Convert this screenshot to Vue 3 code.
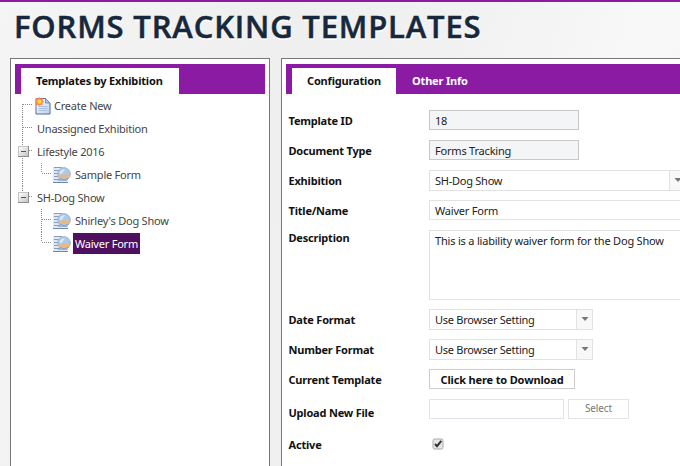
<script setup>
const tree = [
  { text: 'Create New', icon: 'new', level: 0, line: 'first' },
  { text: 'Unassigned Exhibition', level: 0, line: 'through' },
  { text: 'Lifestyle 2016', level: 0, line: 'through', toggle: true },
  { text: 'Sample Form', icon: 'doc', level: 1, parentLine: true, line: 'last' },
  { text: 'SH-Dog Show', level: 0, line: 'last', toggle: true },
  { text: "Shirley's Dog Show", icon: 'doc', level: 1, line: 'through' },
  { text: 'Waiver Form', icon: 'doc', level: 1, line: 'last', selected: true },
]
const rows = [
  { label: 'Template ID', type: 'readonly', value: '18' },
  { label: 'Document Type', type: 'readonly', value: 'Forms Tracking' },
  { label: 'Exhibition', type: 'wide', value: 'SH-Dog Show' },
  { label: 'Title/Name', type: 'text', value: 'Waiver Form' },
  { label: 'Description', type: 'area', value: 'This is a liability waiver form for the Dog Show' },
  { label: 'Date Format', type: 'combo', value: 'Use Browser Setting' },
  { label: 'Number Format', type: 'combo', value: 'Use Browser Setting' },
  { label: 'Current Template', type: 'button', value: 'Click here to Download' },
  { label: 'Upload New File', type: 'upload' },
  { label: 'Active', type: 'check' },
]
</script>

<template>
  <div class="page">
    <h1>FORMS TRACKING TEMPLATES</h1>
    <main>
      <section class="panel side">
        <nav class="tabs"><span class="tab active">Templates by Exhibition</span></nav>
        <ul class="tree">
          <li v-for="n in tree" :key="n.text" :class="['lvl' + n.level, { hasicon: n.icon }]">
            <svg class="lines" width="36" height="23" shape-rendering="crispEdges">
              <defs>
                <linearGradient id="knob" x2="1" y2="1"><stop stop-color="#fff" /><stop offset="1" stop-color="#c4c4c4" /></linearGradient>
              </defs>
              <g fill="none" stroke="#8c8c8c" stroke-dasharray="1 1">
                <template v-if="n.level === 0">
                  <path v-if="n.line === 'first'" d="M7.5 10V23" />
                  <path v-else-if="n.line === 'last'" d="M7.5 0V10" />
                  <path v-else d="M7.5 0V23" />
                  <path d="M8 10.500H17" />
                </template>
                <template v-else>
                  <path v-if="n.parentLine" d="M7.5 0V23" />
                  <path :d="n.line === 'last' ? 'M26.500 0V10' : 'M26.500 0V23'" />
                  <path d="M27 10.500H36" />
                </template>
              </g>
              <g v-if="n.toggle">
                <rect x="3" y="6" width="11" height="11" fill="#8e8e8e" />
                <path d="M3 6H13V7H4V16H3z" fill="#c4c4c4" />
                <rect x="4" y="7" width="9" height="9" fill="url(#knob)" />
                <path d="M6 11H11V12H6z" fill="#555" />
              </g>
            </svg>
            <svg v-if="n.icon === 'new'" class="ico new" width="16" height="18" viewBox="0 0 16 18">
              <defs>
                <linearGradient id="sheet" x2="1" y2="1"><stop stop-color="#fff" /><stop offset="1" stop-color="#bdd0ef" /></linearGradient>
              </defs>
              <path d="M1 1.500H10.500L15 6V17H1Z" fill="url(#sheet)" stroke="#526d9f" />
              <path d="M10.500 1.500V6H15Z" fill="#b3c8e8" stroke="#6680af" stroke-width=".8" />
              <path d="M3.500 9.500H12.500M3.500 11.500H12.500M3.500 13.500H12.500" stroke="#a9bddd" />
              <path d="M4.500 0 5.700 1.700 8 1.200 7.600 3.500 9 5 7.400 6.200 7.500 8.500 5.200 8 4 9 2.700 8 .3 8.300 1 6 0 4.500 1.200 3 .8.9 3.200 1.500Z" fill="#f58a5c" />
              <circle cx="4.500" cy="4.700" r="2.100" fill="#ffda36" />
            </svg>
            <svg v-if="n.icon === 'doc'" class="ico doc" width="18" height="18" viewBox="0 0 18 18">
              <path d="M0 1H12L15 4V17H0Z" fill="#dfe8f5" />
              <path d="M1 1.500H9M1 4.500H6M1 7.500H5M1 10.500H5M1 13.500H7" stroke="#8a9cbc" />
              <path d="M0 16.500H15" stroke="#7186ac" />
              <path d="M5 14.500H14" stroke="#a9b9d2" />
              <circle cx="11" cy="8" r="6.300" fill="#a9cae8" stroke="#a3b1c6" />
              <path d="M6.500 6.500Q8 3 12 3L8 9Z" fill="#d4e9fa" />
              <path d="M7 8.500H16V12H7.500Z" fill="#eeb67d" />
              <path d="M7 12.500Q11 15 15.500 12.500" fill="none" stroke="#8fa0bb" />
            </svg>
            <span class="node" :class="{ selected: n.selected }">{{ n.text }}</span>
          </li>
        </ul>
      </section>

      <section class="panel content">
        <nav class="tabs"><span class="tab active config">Configuration</span><span class="tab">Other Info</span></nav>
        <form>
          <div v-for="r in rows" :key="r.label" class="row" :class="'row-' + r.type">
            <label>{{ r.label }}</label>
            <div v-if="r.type === 'wide' || r.type === 'combo'" class="select" :class="r.type">
              <span>{{ r.value }}</span>
              <i><svg width="8" height="5"><path d="M.5 0H7.500L4 4Z" fill="#777" /></svg></i>
            </div>
            <div v-else-if="r.type === 'upload'" class="upload"><div class="file"></div><div class="pick">Select</div></div>
            <svg v-else-if="r.type === 'check'" class="check" width="12" height="12" viewBox="0 0 12 12">
              <rect x="1" y="1" width="10" height="10" rx="1.500" fill="#e6e6e6" stroke="#aaa" />
              <path d="M3 6 5 8.200 9.300 2.800" fill="none" stroke="#333" stroke-width="2" />
            </svg>
            <div v-else class="field" :class="r.type">{{ r.value }}</div>
          </div>
        </form>
      </section>
    </main>
  </div>
</template>

<style>
body { margin: 0; overflow: hidden; }
</style>
<style scoped>
* { box-sizing: border-box; }
.page { width: 680px; height: 466px; overflow: hidden; border-top: 2px solid #8b1ba3; background: linear-gradient(105deg, #f5f5f5 0%, #efefef 35%, #f1f1f1 58%, #f8f8f8 80%, #f6f6f6 100%); font: 11px/15px "Noto Sans", "Open Sans", sans-serif; letter-spacing: -.2px; color: #222; }
h1 { margin: 0; height: 56px; padding: 4px 0 0 14px; font: 600 31px/40px "Open Sans", "Noto Sans", sans-serif; letter-spacing: .83px; color: #17283c; white-space: nowrap; text-shadow: 1px 2px 1px #fff; -webkit-text-stroke: .5px #17283c; }
main { display: flex; gap: 11px; padding-left: 10px; }
.panel { height: 420px; border: 1px solid #777; background: #fff; flex: none; }
.side { width: 260px; padding: 5px 4px; }
.content { width: 500px; padding: 5px 4px; }
.tabs { display: flex; height: 30px; padding: 4px 0 0 6px; background: #8b1ba3; }
.tab { height: 26px; padding: 5px 15px 0; font-weight: 700; color: #fff; white-space: nowrap; letter-spacing: -.17px; }
.tab + .tab { padding-left: 16px; }
.tab.active { width: 158px; background: #fff; color: #111; }
.tab.config { width: 104px; }
.tree { list-style: none; margin: 0; padding: 0; }
.tree li { display: flex; height: 23px; align-items: center; white-space: nowrap; }
.lines { flex: none; }
.lvl0 .lines { width: 20px; }
.lvl1 .lines { width: 36px; }
.ico { flex: none; }
.new { margin-right: 1px; }
.doc { margin-left: 2px; }
.node { height: 21px; padding: 3px 2px 0; line-height: 15px; color: #444; letter-spacing: -.22px; }
.lvl1 .node { margin-left: 2px; }
.node.selected { background: #501060; color: #fff; }
form { padding-top: 16px; }
.row { display: flex; height: 30px; padding-left: 3px; align-items: flex-start; white-space: nowrap; }
label { width: 140px; padding-top: 3px; flex: none; font-weight: 700; color: #111; margin-left: -.5px; margin-right: .5px; }
.row-area { height: 79px; }
.row-area label { padding-top: 0; }
.row-upload label { padding-top: 6px; }
.row-check label { padding-top: 8px; }
.field { height: 20px; border: 1px solid #e2e2e2; padding: 2px 5px 0; color: #222; width: 300px; }
.field.readonly { width: 150px; background: #f4f5f7; border-color: #c8c8c8; }
.field.area { height: 70px; }
.field.button { width: 146px; padding: 2px 0 0; text-align: center; border-color: #ccc; color: #111; font-weight: 700; letter-spacing: -.15px; }
.select { display: flex; height: 21px; border: 1px solid #e2e2e2; }
.select span { flex: 1; padding: 2px 5px 0; letter-spacing: -.25px; }
.select i { width: 17px; border-left: 1px solid #e2e2e2; background: #f8f8f8; display: flex; justify-content: center; padding-top: 7px; }
.select.wide { width: 258px; }
.select.combo { width: 164px; }
.select.combo i { width: 16px; }
.upload { display: flex; gap: 4px; }
.file { width: 135px; height: 20px; border: 1px solid #e2e2ea; }
.pick { width: 61px; height: 20px; padding-top: 1px; border: 1px solid #e4e4e4; text-align: center; color: #777; font-size: 10px; letter-spacing: -.1px; }
.check { margin: 9px 0 0 3px; }
</style>
